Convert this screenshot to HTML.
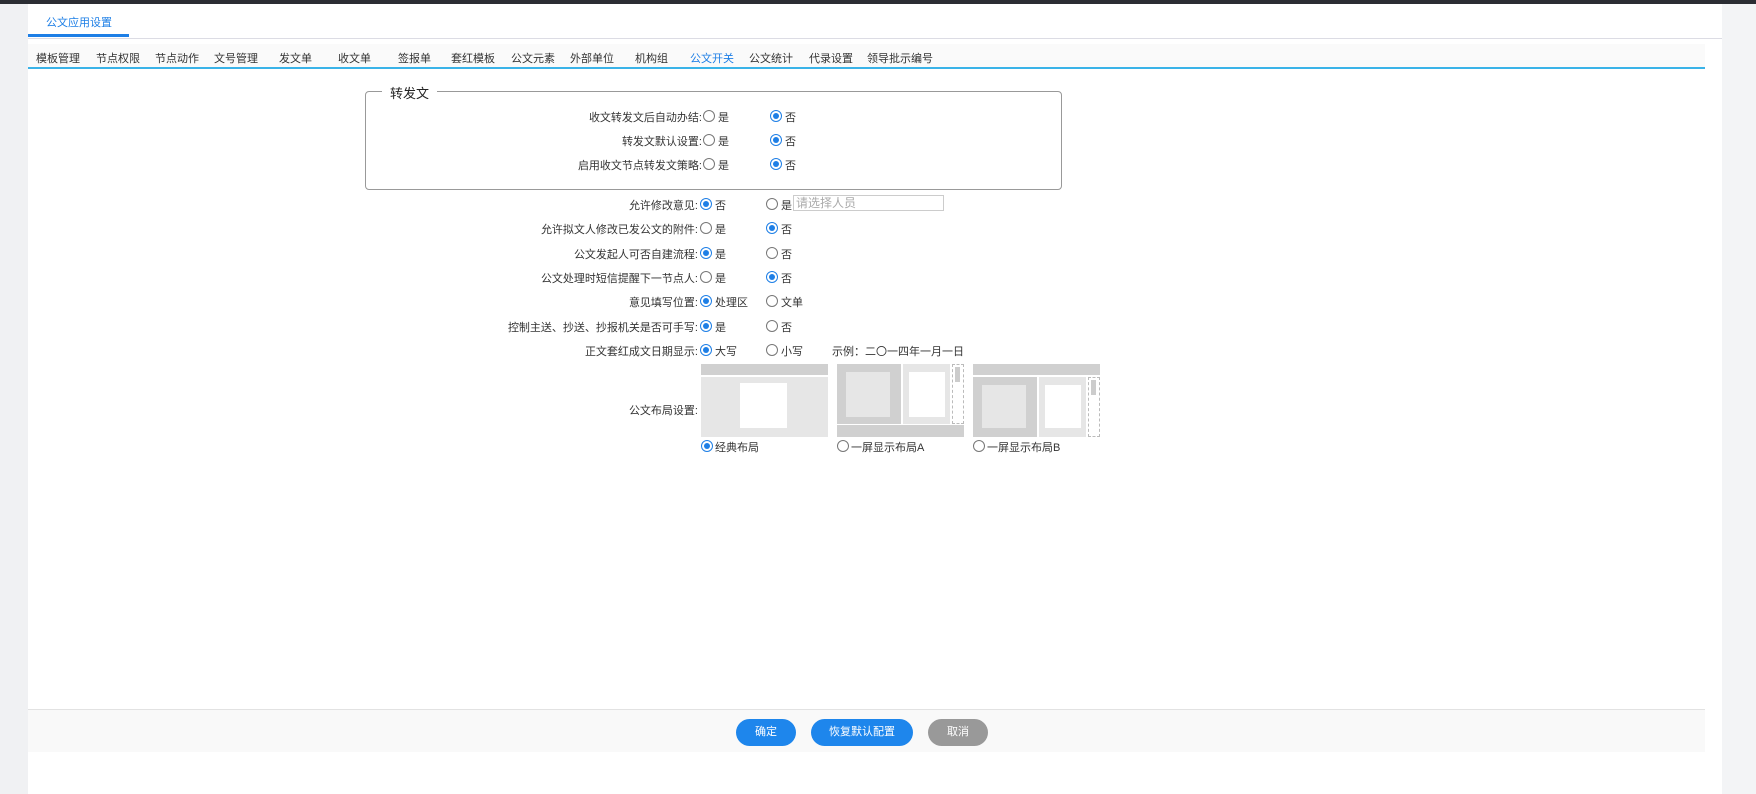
<!DOCTYPE html>
<html><head><meta charset="utf-8"><style>
*{margin:0;padding:0;box-sizing:border-box}
body{width:1756px;height:794px;background:#f0f1f3;font-family:"Liberation Sans","Noto Sans CJK SC",sans-serif;font-size:11px;color:#333;position:relative;overflow:hidden}
.a{position:absolute;white-space:nowrap}
.r{position:absolute;width:12px;height:12px;border:1px solid #777;border-radius:50%;background:#fff}
.r.on{border:1px solid #1e7fe6}
.r.on::after{content:"";position:absolute;left:2px;top:2px;width:6px;height:6px;border-radius:50%;background:#1e7fe6}
.lbl{position:absolute;text-align:right;white-space:nowrap}
.btn{position:absolute;top:719px;height:27px;border-radius:14px;color:#fff;text-align:center;line-height:27px;font-size:11px}
</style></head><body>
<div class="a" style="left:0;top:0;width:1756px;height:4px;background:#2b2d33"></div>
<div class="a" style="left:28px;top:4px;width:1694px;height:790px;background:#fff"></div>
<div class="a" style="left:1722px;top:4px;width:34px;height:790px;background:#f3f4f6"></div>
<div class="a" style="left:46px;top:14px;color:#1e7fe6">公文应用设置</div>
<div class="a" style="left:28px;top:34px;width:101px;height:3px;background:#1e7fe6"></div>
<div class="a" style="left:129px;top:38px;width:1593px;height:1px;background:#dcdce4"></div>
<div class="a" style="left:28px;top:38px;width:101px;height:1px;background:#dcdce4"></div>
<div class="a" style="left:28px;top:44px;width:1677px;height:24px;background:#fafafa"></div>
<div class="a" style="left:28px;top:67px;width:1677px;height:2px;background:#3ab3e8"></div>
<div style="position:absolute;top:50px;left:0">
<span class="a" style="left:36px">模板管理</span><span class="a" style="left:96px">节点权限</span><span class="a" style="left:155px">节点动作</span><span class="a" style="left:214px">文号管理</span><span class="a" style="left:279px">发文单</span><span class="a" style="left:338px">收文单</span><span class="a" style="left:398px">签报单</span><span class="a" style="left:451px">套红模板</span><span class="a" style="left:511px">公文元素</span><span class="a" style="left:570px">外部单位</span><span class="a" style="left:635px">机构组</span><span class="a" style="left:690px;color:#1e7fe6">公文开关</span><span class="a" style="left:749px">公文统计</span><span class="a" style="left:809px">代录设置</span><span class="a" style="left:867px">领导批示编号</span>
</div>
<div class="a" style="left:365px;top:91px;width:697px;height:99px;border:1px solid #999;border-radius:4px"></div>
<div class="a" style="left:382px;top:83px;padding:0 8px;background:#fff;font-size:13px;color:#222">转发文</div>
<div class="lbl" style="right:1054px;top:109px">收文转发文后自动办结:</div><div class="r" style="left:703px;top:110px"></div><div class="a" style="left:718px;top:109px">是</div><div class="r on" style="left:770px;top:110px"></div><div class="a" style="left:785px;top:109px">否</div>
<div class="lbl" style="right:1054px;top:133px">转发文默认设置:</div><div class="r" style="left:703px;top:134px"></div><div class="a" style="left:718px;top:133px">是</div><div class="r on" style="left:770px;top:134px"></div><div class="a" style="left:785px;top:133px">否</div>
<div class="lbl" style="right:1054px;top:157px">启用收文节点转发文策略:</div><div class="r" style="left:703px;top:158px"></div><div class="a" style="left:718px;top:157px">是</div><div class="r on" style="left:770px;top:158px"></div><div class="a" style="left:785px;top:157px">否</div>

<div class="lbl" style="right:1058px;top:197px">允许修改意见:</div><div class="r on" style="left:700px;top:198px"></div><div class="a" style="left:715px;top:197px">否</div><div class="r" style="left:766px;top:198px"></div><div class="a" style="left:781px;top:197px">是</div>
<div class="a" style="left:793px;top:195px;width:151px;height:16px;border:1px solid #ccc;color:#aaa;padding-left:2px;line-height:14px;font-size:12px">请选择人员</div>
<div class="lbl" style="right:1058px;top:221px">允许拟文人修改已发公文的附件:</div><div class="r" style="left:700px;top:222px"></div><div class="a" style="left:715px;top:221px">是</div><div class="r on" style="left:766px;top:222px"></div><div class="a" style="left:781px;top:221px">否</div>
<div class="lbl" style="right:1058px;top:246px">公文发起人可否自建流程:</div><div class="r on" style="left:700px;top:247px"></div><div class="a" style="left:715px;top:246px">是</div><div class="r" style="left:766px;top:247px"></div><div class="a" style="left:781px;top:246px">否</div>
<div class="lbl" style="right:1058px;top:270px">公文处理时短信提醒下一节点人:</div><div class="r" style="left:700px;top:271px"></div><div class="a" style="left:715px;top:270px">是</div><div class="r on" style="left:766px;top:271px"></div><div class="a" style="left:781px;top:270px">否</div>
<div class="lbl" style="right:1058px;top:294px">意见填写位置:</div><div class="r on" style="left:700px;top:295px"></div><div class="a" style="left:715px;top:294px">处理区</div><div class="r" style="left:766px;top:295px"></div><div class="a" style="left:781px;top:294px">文单</div>
<div class="lbl" style="right:1058px;top:319px">控制主送、抄送、抄报机关是否可手写:</div><div class="r on" style="left:700px;top:320px"></div><div class="a" style="left:715px;top:319px">是</div><div class="r" style="left:766px;top:320px"></div><div class="a" style="left:781px;top:319px">否</div>
<div class="lbl" style="right:1058px;top:343px">正文套红成文日期显示:</div><div class="r on" style="left:700px;top:344px"></div><div class="a" style="left:715px;top:343px">大写</div><div class="r" style="left:766px;top:344px"></div><div class="a" style="left:781px;top:343px">小写</div><div class="a" style="left:832px;top:343px">示例：二〇一四年一月一日</div>
<div class="lbl" style="right:1058px;top:402px">公文布局设置:</div>

<div class="a" style="left:701px;top:364px;width:127px;height:73px;background:#e6e6e6"></div>
<div class="a" style="left:701px;top:364px;width:127px;height:11px;background:#d0d0d0"></div>
<div class="a" style="left:701px;top:375px;width:127px;height:2px;background:#fff"></div>
<div class="a" style="left:740px;top:383px;width:47px;height:45px;background:#fff"></div>

<div class="a" style="left:837px;top:364px;width:127px;height:73px;background:#fff"></div>
<div class="a" style="left:837px;top:364px;width:64px;height:60px;background:#d0d0d0"></div>
<div class="a" style="left:846px;top:372px;width:44px;height:45px;background:#e6e6e6"></div>
<div class="a" style="left:903px;top:364px;width:47px;height:60px;background:#e6e6e6"></div>
<div class="a" style="left:909px;top:372px;width:36px;height:45px;background:#fff"></div>
<div class="a" style="left:952px;top:364px;width:12px;height:60px;border:1px dashed #bbb"></div>
<div class="a" style="left:955px;top:367px;width:5px;height:15px;background:#ccc"></div>
<div class="a" style="left:837px;top:425px;width:127px;height:12px;background:#d0d0d0"></div>

<div class="a" style="left:973px;top:364px;width:127px;height:11px;background:#d0d0d0"></div>
<div class="a" style="left:973px;top:377px;width:64px;height:60px;background:#d0d0d0"></div>
<div class="a" style="left:982px;top:385px;width:44px;height:43px;background:#e6e6e6"></div>
<div class="a" style="left:1039px;top:377px;width:47px;height:60px;background:#e6e6e6"></div>
<div class="a" style="left:1045px;top:385px;width:36px;height:43px;background:#fff"></div>
<div class="a" style="left:1088px;top:377px;width:12px;height:60px;border:1px dashed #bbb"></div>
<div class="a" style="left:1091px;top:380px;width:5px;height:15px;background:#ccc"></div>

<div class="r on" style="left:701px;top:440px"></div><div class="a" style="left:715px;top:439px">经典布局</div>
<div class="r" style="left:837px;top:440px"></div><div class="a" style="left:851px;top:439px">一屏显示布局A</div>
<div class="r" style="left:973px;top:440px"></div><div class="a" style="left:987px;top:439px">一屏显示布局B</div>

<div class="a" style="left:28px;top:709px;width:1677px;height:43px;background:#f9f9f9;border-top:1px solid #e2e2e2"></div>
<div class="btn" style="left:736px;width:60px;background:#1e86ec">确定</div>
<div class="btn" style="left:811px;width:102px;background:#1e86ec">恢复默认配置</div>
<div class="btn" style="left:928px;width:60px;background:#999">取消</div>
</body></html>
